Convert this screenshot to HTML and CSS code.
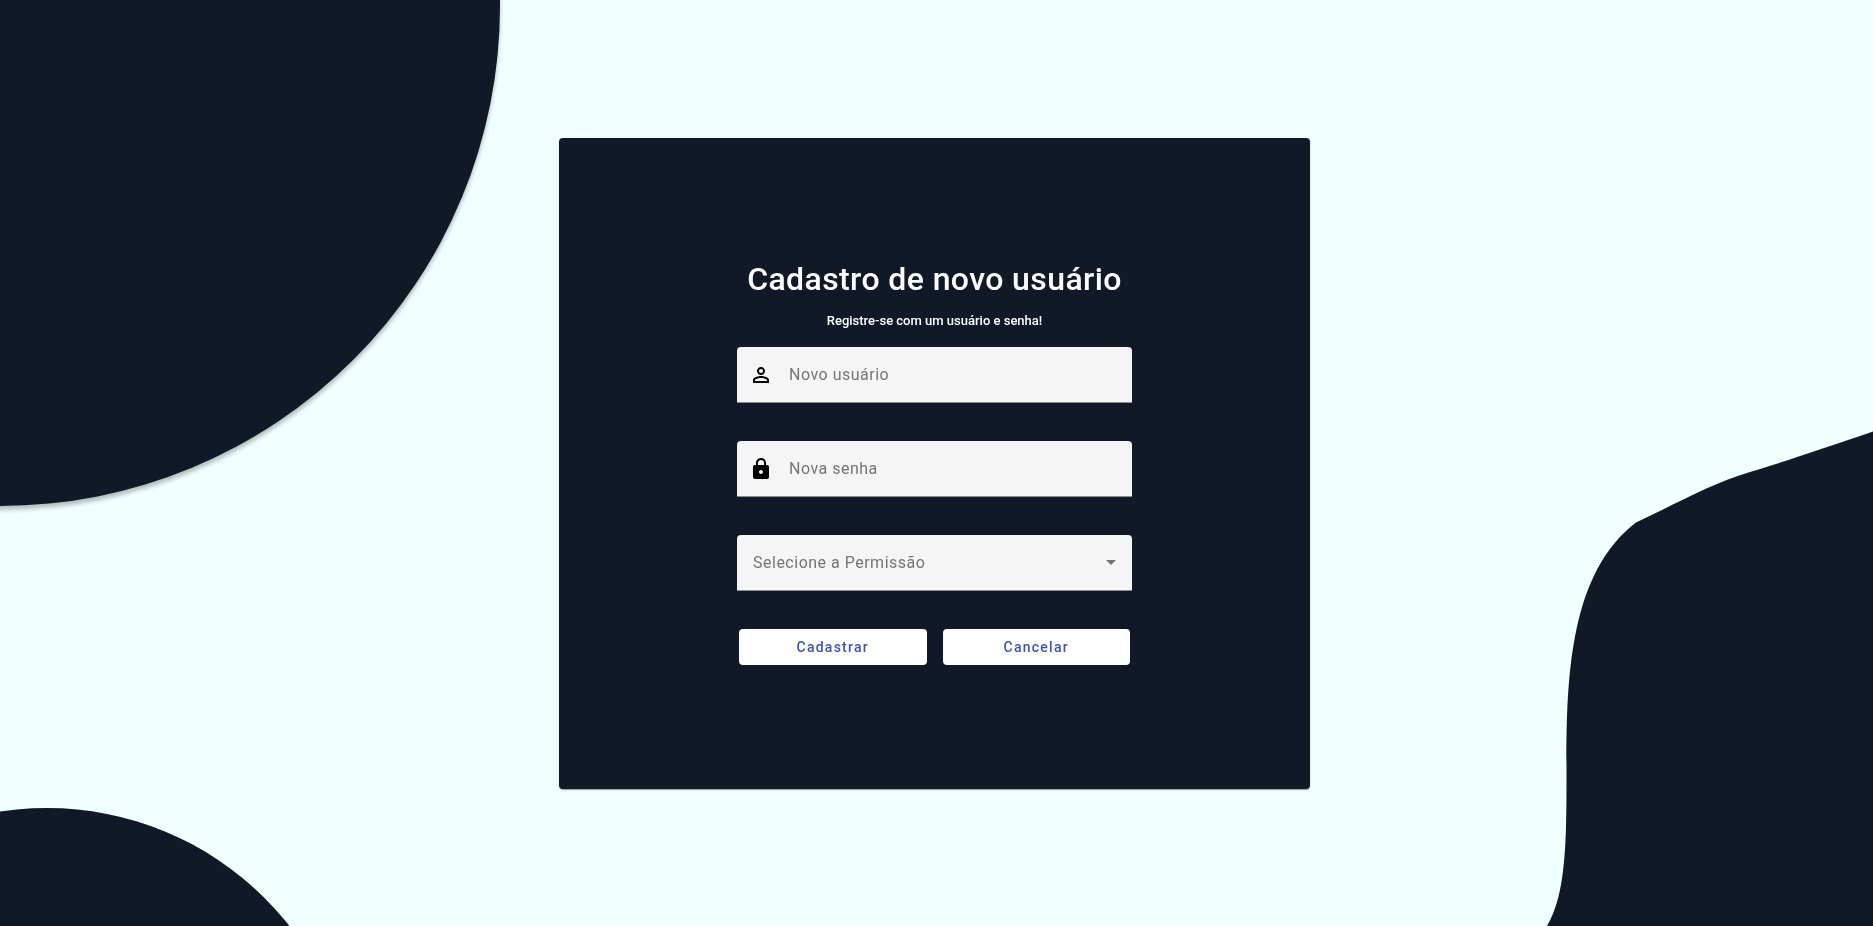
FILE: index.html
```html
<!DOCTYPE html>
<html lang="pt-BR">
<head>
<meta charset="utf-8">
<meta name="viewport" content="width=device-width, initial-scale=1">
<title>Cadastro de novo usuário</title>
<link rel="stylesheet" href="styles.css">
</head>
<body>
<div class="backdrop" aria-hidden="true">
  <div class="blob blob-top"></div>
  <div class="blob blob-bottom"></div>
  <svg class="wave" viewBox="0 0 333 500">
    <path d="M333 5.500 C285 22 240 37 210 46 C170 58 140 76 96 96.500 C30 147 26.500 250 26.500 341 C26.500 410 27 467 7 500 H333 Z"/>
  </svg>
</div>
<main class="page">
  <form class="card">
    <h1 class="title">Cadastro de novo usuário</h1>
    <p class="subtitle">Registre-se com um usuário e senha!</p>
    <div class="fields">
      <label class="field">
        <svg class="icon" viewBox="0 0 24 24"><path d="M12 5.900a2.100 2.100 0 1 1 0 4.200 2.100 2.100 0 0 1 0-4.200m0 9c2.970 0 6.100 1.460 6.100 2.100v1.100H5.900V17c0-.64 3.130-2.100 6.100-2.100M12 4C9.790 4 8 5.790 8 8s1.790 4 4 4 4-1.790 4-4-1.790-4-4-4zm0 9c-2.670 0-8 1.340-8 4v3h16v-3c0-2.660-5.330-4-8-4z"/></svg>
        <input class="control" type="text" placeholder="Novo usuário" aria-label="Novo usuário">
      </label>
      <label class="field">
        <svg class="icon" viewBox="0 0 24 24"><path d="M18 8h-1V6c0-2.760-2.240-5-5-5S7 3.240 7 6v2H6c-1.100 0-2 .9-2 2v10c0 1.100.9 2 2 2h12c1.100 0 2-.9 2-2V10c0-1.100-.9-2-2-2zm-6 9c-1.100 0-2-.9-2-2s.9-2 2-2 2 .9 2 2-.9 2-2 2zm3.100-9H8.900V6c0-1.710 1.390-3.100 3.100-3.100s3.100 1.390 3.100 3.100v2z"/></svg>
        <input class="control" type="password" placeholder="Nova senha" aria-label="Nova senha">
      </label>
      <label class="field field-select">
        <select class="control" aria-label="Selecione a Permissão">
          <option>Selecione a Permissão</option>
        </select>
        <svg class="arrow" viewBox="0 0 10 5"><path d="M0 0h10L5 5z"/></svg>
      </label>
    </div>
    <div class="actions">
      <button class="button" type="submit">Cadastrar</button>
      <button class="button" type="button">Cancelar</button>
    </div>
  </form>
</main>
</body>
</html>
```
FILE: styles.css
```css
* {
  box-sizing: border-box;
}

body {
  margin: 0;
  background: #f0ffff;
  font-family: Roboto, "Liberation Sans", sans-serif;
}

.backdrop {
  position: fixed;
  inset: 0;
  overflow: hidden;
}

.blob {
  position: absolute;
  border-radius: 50%;
  background: #111827;
}

.blob-top {
  top: -494px;
  left: -500px;
  width: 1000px;
  height: 1000px;
  box-shadow: 0 4px 4px rgba(0, 0, 0, 0.25);
}

.blob-bottom {
  left: -261px;
  bottom: -498px;
  width: 616px;
  height: 616px;
}

.wave {
  position: absolute;
  right: 0;
  bottom: 0;
  width: 333px;
  height: 500px;
  fill: #111827;
}

.page {
  position: relative;
  display: flex;
  align-items: center;
  justify-content: center;
  min-height: 100vh;
  padding: 17px 20px 16px 16px;
}

.card {
  display: flex;
  flex-direction: column;
  align-items: center;
  width: 100%;
  max-width: 751px;
  padding: 125px 16px 124px;
  border-radius: 4px;
  background: #111827;
  box-shadow: 0 2px 1px -1px rgba(0, 0, 0, 0.2), 0 1px 1px rgba(0, 0, 0, 0.14), 0 1px 3px rgba(0, 0, 0, 0.12);
}

.title {
  margin: 0;
  color: #fff;
  font-size: 32px;
  font-weight: 500;
  line-height: 32px;
  letter-spacing: 0.0125em;
  text-align: center;
}

.subtitle {
  margin: 16px 0;
  color: #fff;
  font-size: 13px;
  font-weight: 500;
  line-height: 20px;
  text-align: center;
}

.fields {
  display: grid;
  gap: 38px;
  width: 100%;
  max-width: 395px;
}

.field {
  display: flex;
  align-items: center;
  gap: 16px;
  height: 56px;
  padding: 0 16px 0 12px;
  border-bottom: 1px solid #8c8c8c;
  border-radius: 4px 4px 0 0;
  background: #f5f5f5;
}

.field-select {
  padding-left: 16px;
}

.icon {
  flex: none;
  width: 24px;
  height: 24px;
}

.control {
  flex: 1;
  min-width: 0;
  height: 24px;
  padding: 0;
  border: 0;
  outline: 0;
  background: transparent;
  color: #757575;
  font: 400 16px/24px Roboto, "Liberation Sans", sans-serif;
  letter-spacing: 0.03125em;
  appearance: none;
}

.control::placeholder {
  color: #757575;
}

.arrow {
  flex: none;
  width: 10px;
  height: 5px;
  fill: #757575;
}

.actions {
  display: flex;
  gap: 16px;
  width: 100%;
  max-width: 391px;
  margin-top: 38px;
}

.button {
  flex: 1;
  height: 36px;
  padding: 0 16px;
  border: 0;
  border-radius: 4px;
  background: #fff;
  color: #3f51b5;
  font: 500 14px/36px Roboto, "Liberation Sans", sans-serif;
  letter-spacing: 0.09em;
}
```
